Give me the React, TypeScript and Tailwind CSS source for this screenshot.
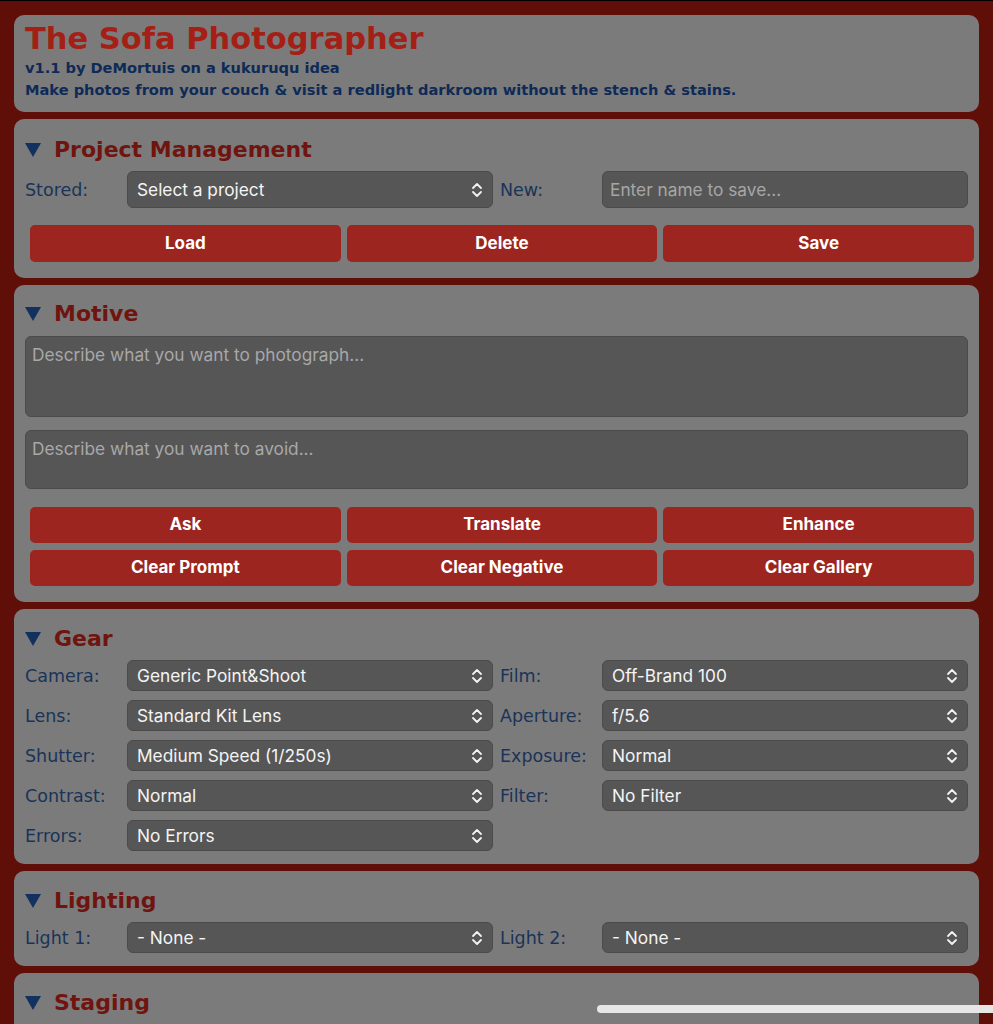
import React from 'react';

const labelFont = { fontFamily: '"DejaVu Sans", Verdana, sans-serif' };

const Chevrons = () => (
  <svg
    className="pointer-events-none absolute right-[10px] top-1/2 -translate-y-1/2"
    width="12"
    height="16"
    viewBox="0 0 12 16"
    fill="none"
    stroke="#f2f2f2"
    strokeWidth="1.8"
    strokeLinecap="round"
    strokeLinejoin="round"
  >
    <polyline points="2,6 6,2 10,6" />
    <polyline points="2,10 6,14 10,10" />
  </svg>
);

const Select = ({ value, tall = false }: { value: string; tall?: boolean }) => (
  <div className={`relative flex-1 ${tall ? 'h-[37px]' : 'h-[31px]'}`}>
    <select
      defaultValue={value}
      className="h-full w-full appearance-none rounded-[6px] border border-[#4b4b4b] bg-[#565656] pl-[9px] pr-8 text-[17.3px] text-[#f4f4f4] outline-none font-['Inter',sans-serif]"
    >
      <option>{value}</option>
    </select>
    <Chevrons />
  </div>
);

const Label = ({ text }: { text: string }) => (
  <span className="w-[102px] shrink-0 pt-[2px] text-[17.5px] text-[#1a3358]" style={labelFont}>
    {text}
  </span>
);

const Field = ({ label, value, tall }: { label: string; value: string; tall?: boolean }) => (
  <div className="flex items-center">
    <Label text={label} />
    <Select value={value} tall={tall} />
  </div>
);

const SectionHeader = ({ title }: { title: string }) => (
  <div className="flex items-center h-[30px]">
    <svg width="16" height="14" viewBox="0 0 16 14" className="mr-[13px]">
      <polygon points="0,0 16,0 8,14" fill="#13315e" />
    </svg>
    <h2 className="text-[22px] font-bold text-[#701410] leading-[30px]" style={labelFont}>
      {title}
    </h2>
  </div>
);

const Card = ({ children, className = '' }: { children: React.ReactNode; className?: string }) => (
  <section className={`rounded-[10px] bg-[#7b7b7b] px-[11px] ${className}`}>{children}</section>
);

const Btn = ({ label }: { label: string }) => (
  <button className="h-[37px] rounded-[5px] bg-[#9c251f] text-[17px] font-bold text-white font-['Inter',sans-serif]">
    {label}
  </button>
);

export default function App() {
  return (
    <div className="min-h-screen border-t border-black bg-[#5f0e08] px-[14px] pt-[14px] pb-4">
      <div className="flex flex-col gap-[7px]">
        {/* Title */}
        <Card className="pt-[5px] pb-[10px]">
          <h1 className="text-[30.5px] font-bold leading-[38px] text-[#a41f15]" style={labelFont}>
            The Sofa Photographer
          </h1>
          <p className="text-[14.6px] font-bold leading-[20px] text-[#0f2a56]" style={labelFont}>
            v1.1 by DeMortuis on a kukuruqu idea
          </p>
          <p className="text-[14.6px] font-bold leading-[24px] text-[#0f2a56]" style={labelFont}>
            Make photos from your couch &amp; visit a redlight darkroom without the stench &amp; stains.
          </p>
        </Card>

        {/* Project Management */}
        <Card className="pt-[16px] pb-[16px]">
          <SectionHeader title="Project Management" />
          <div className="mt-[6px] grid grid-cols-2 gap-x-[7px]">
            <Field label="Stored:" value="Select a project" tall />
            <div className="flex items-center">
              <Label text="New:" />
              <input
                placeholder="Enter name to save..."
                className="h-[37px] flex-1 rounded-[6px] border border-[#4b4b4b] bg-[#565656] px-[7px] text-[17.3px] text-white placeholder:text-[#a6a6a6] outline-none font-['Inter',sans-serif]"
              />
            </div>
          </div>
          <div className="mt-[17px] ml-[5px] -mr-[6px] grid grid-cols-3 gap-[6px]">
            <Btn label="Load" />
            <Btn label="Delete" />
            <Btn label="Save" />
          </div>
        </Card>

        {/* Motive */}
        <Card className="pt-[14px] pb-[16px]">
          <SectionHeader title="Motive" />
          <textarea
            placeholder="Describe what you want to photograph..."
            className="mt-[7px] block h-[81px] w-full resize-none rounded-[6px] border border-[#4b4b4b] bg-[#565656] px-[6px] py-[5px] text-[17.3px] text-white placeholder:text-[#a8a8a8] outline-none font-['Inter',sans-serif]"
          />
          <textarea
            placeholder="Describe what you want to avoid..."
            className="mt-[13px] block h-[59px] w-full resize-none rounded-[6px] border border-[#4b4b4b] bg-[#565656] px-[6px] py-[5px] text-[17.3px] text-white placeholder:text-[#a8a8a8] outline-none font-['Inter',sans-serif]"
          />
          <div className="mt-[18px] ml-[5px] -mr-[6px] grid grid-cols-3 gap-x-[6px] gap-y-[7px] [&>button]:h-[36px]">
            <Btn label="Ask" />
            <Btn label="Translate" />
            <Btn label="Enhance" />
            <Btn label="Clear Prompt" />
            <Btn label="Clear Negative" />
            <Btn label="Clear Gallery" />
          </div>
        </Card>

        {/* Gear */}
        <Card className="pt-[15px] pb-[13px]">
          <SectionHeader title="Gear" />
          <div className="mt-[6px] grid grid-cols-2 gap-x-[7px] gap-y-[9px]">
            <Field label="Camera:" value="Generic Point&Shoot" />
            <Field label="Film:" value="Off-Brand 100" />
            <Field label="Lens:" value="Standard Kit Lens" />
            <Field label="Aperture:" value="f/5.6" />
            <Field label="Shutter:" value="Medium Speed (1/250s)" />
            <Field label="Exposure:" value="Normal" />
            <Field label="Contrast:" value="Normal" />
            <Field label="Filter:" value="No Filter" />
            <Field label="Errors:" value="No Errors" />
          </div>
        </Card>

        {/* Lighting */}
        <Card className="pt-[15px] pb-[13px]">
          <SectionHeader title="Lighting" />
          <div className="mt-[6px] grid grid-cols-2 gap-x-[7px]">
            <Field label="Light 1:" value="- None -" />
            <Field label="Light 2:" value="- None -" />
          </div>
        </Card>

        {/* Staging */}
        <Card className="pt-[15px] pb-[40px]">
          <SectionHeader title="Staging" />
        </Card>
      </div>

      {/* iOS scroll indicator */}
      <div className="fixed left-[597px] top-[1005px] h-[8px] w-[420px] rounded-full bg-[#e6e6e6]" />
    </div>
  );
}
